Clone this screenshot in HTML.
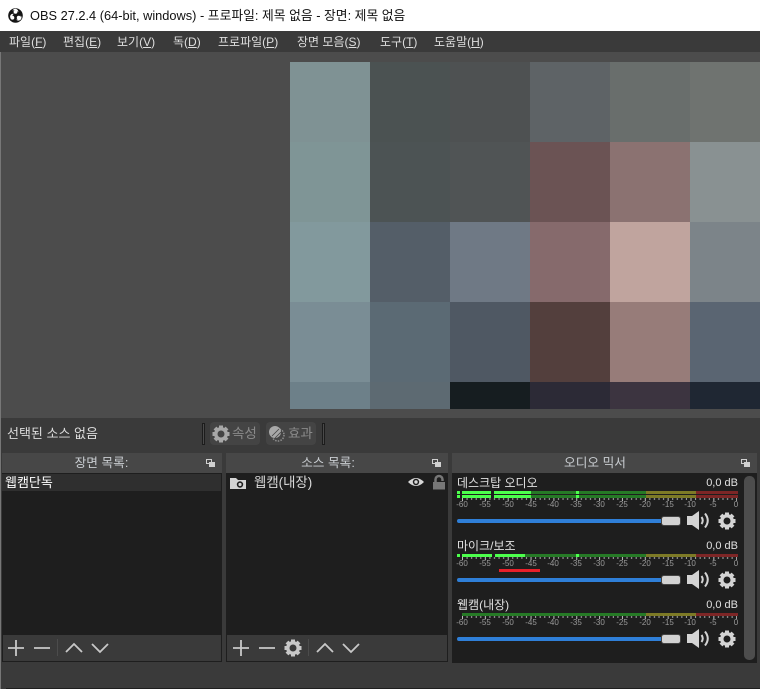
<!DOCTYPE html>
<html lang="ko"><head><meta charset="utf-8"><title>OBS</title>
<style>
html,body{margin:0;padding:0;background:#3a3a3a}
#r{position:relative;width:760px;height:689px;overflow:hidden;background:#3a3a3a;font-family:"Liberation Sans","Noto Sans CJK KR",sans-serif;font-size:12px;color:#ddd}
#r div{position:absolute}
.t{white-space:nowrap;line-height:16px}
.m{top:34px;color:#dedede}
.h{background:#474747;top:453px;height:20px}
.dt{top:455px;color:#c8ccd0;text-align:center;font-size:12.7px}
.l{background:#1e1e1e;top:473px}
.tb{background:#3a3a3a;top:635px;height:26px;border:1px solid #1e1e1e;border-top:0;box-sizing:content-box}
.px{position:absolute}
.db{left:688px;width:50px;text-align:right;color:#e0e0e0;font-size:11px}
</style></head><body><div id="r">
<div style="left:0;top:0;width:760px;height:31px;background:#fff"></div>
<svg class="px" style="left:8px;top:8px" width="15" height="15" viewBox="0 0 15 15"><circle cx="7.5" cy="7.5" r="7.3" fill="#151515"/><path d="M4.500 2.800A3 3 0 0 1 10.300 4.200A4 4 0 0 0 4.500 2.800ZM2.200 9.500A3 3 0 0 1 5.800 5.800A4 4 0 0 0 5 11.500A3 3 0 0 1 2.200 9.500ZM12.800 7.500A3 3 0 0 1 8 11.500A4 4 0 0 0 12.800 7.500Z" fill="#fff"/><circle cx="7.500" cy="3.900" r="1.900" fill="#fff"/><circle cx="4.400" cy="9.700" r="1.900" fill="#fff"/><circle cx="10.700" cy="9.700" r="1.900" fill="#fff"/></svg>
<div class="t" style="left:30px;top:8px;color:#111;font-size:12.800px">OBS 27.2.4 (64-bit, windows) - 프로파일: 제목 없음 - 장면: 제목 없음</div>
<div style="left:0;top:31px;width:760px;height:21px;background:#3a3a3a"></div>
<div class="t m" style="left:9px">파일(<u>F</u>)</div>
<div class="t m" style="left:63px">편집(<u>E</u>)</div>
<div class="t m" style="left:117px">보기(<u>V</u>)</div>
<div class="t m" style="left:173px">독(<u>D</u>)</div>
<div class="t m" style="left:218px">프로파일(<u>P</u>)</div>
<div class="t m" style="left:297px">장면 모음(<u>S</u>)</div>
<div class="t m" style="left:380px">도구(<u>T</u>)</div>
<div class="t m" style="left:434px">도움말(<u>H</u>)</div>
<div style="left:0;top:52px;width:760px;height:366px;background:#4c4c4c"></div>
<div style="left:0;top:52px;width:1px;height:637px;background:#777"></div>
<svg class="px" style="left:290px;top:62px" width="470" height="347" shape-rendering="crispEdges">
<rect x="0" y="0" width="80" height="80" fill="#7f9294"/><rect x="80" y="0" width="80" height="80" fill="#4b5252"/><rect x="160" y="0" width="80" height="80" fill="#4e5152"/><rect x="240" y="0" width="80" height="80" fill="#5e6366"/><rect x="320" y="0" width="80" height="80" fill="#696e6c"/><rect x="400" y="0" width="70" height="80" fill="#6f7370"/>
<rect x="0" y="80" width="80" height="80" fill="#7f9596"/><rect x="80" y="80" width="80" height="80" fill="#4c5354"/><rect x="160" y="80" width="80" height="80" fill="#505455"/><rect x="240" y="80" width="80" height="80" fill="#6b5354"/><rect x="320" y="80" width="80" height="80" fill="#8b7271"/><rect x="400" y="80" width="70" height="80" fill="#899192"/>
<rect x="0" y="160" width="80" height="80" fill="#82999d"/><rect x="80" y="160" width="80" height="80" fill="#545e68"/><rect x="160" y="160" width="80" height="80" fill="#6f7985"/><rect x="240" y="160" width="80" height="80" fill="#866a6c"/><rect x="320" y="160" width="80" height="80" fill="#c0a49e"/><rect x="400" y="160" width="70" height="80" fill="#7c8489"/>
<rect x="0" y="240" width="80" height="80" fill="#7a8d95"/><rect x="80" y="240" width="80" height="80" fill="#5b6a74"/><rect x="160" y="240" width="80" height="80" fill="#4f5863"/><rect x="240" y="240" width="80" height="80" fill="#533f3d"/><rect x="320" y="240" width="80" height="80" fill="#977c79"/><rect x="400" y="240" width="70" height="80" fill="#5a6572"/>
<rect x="0" y="320" width="80" height="27" fill="#6d8089"/><rect x="80" y="320" width="80" height="27" fill="#5d6a72"/><rect x="160" y="320" width="80" height="27" fill="#161d20"/><rect x="240" y="320" width="80" height="27" fill="#2c2a36"/><rect x="320" y="320" width="80" height="27" fill="#3c3440"/><rect x="400" y="320" width="70" height="27" fill="#1f2733"/>
</svg>
<div class="t" style="left:7px;top:426px;color:#dcdcdc;font-size:13px">선택된 소스 없음</div>
<div style="left:202px;top:423px;width:1px;height:20px;border:1px solid #1c1c1c;background:#4a4a4a"></div>
<div style="left:322px;top:423px;width:1px;height:20px;border:1px solid #1c1c1c;background:#4a4a4a"></div>
<div style="left:210px;top:422px;width:50px;height:23px;border-radius:4px;background:#444"></div>
<div style="left:266px;top:422px;width:50px;height:23px;border-radius:4px;background:#444"></div>
<div class="t" style="left:232px;top:426px;color:#8a8a8a;font-size:13.500px">속성</div>
<div class="t" style="left:288px;top:426px;color:#8a8a8a;font-size:13.500px">효과</div>
<svg class="px" style="left:0;top:0" width="760" height="689">
<defs>
<g id="gear"><circle r="5.2" fill="none" stroke="currentColor" stroke-width="3.4"/><g fill="currentColor"><rect x="-2" y="-8.500" width="4" height="4"/><rect x="-2" y="4.500" width="4" height="4"/><rect x="-8.500" y="-2" width="4" height="4"/><rect x="4.500" y="-2" width="4" height="4"/><rect x="-2" y="-8.500" width="4" height="4" transform="rotate(45)"/><rect x="-2" y="4.500" width="4" height="4" transform="rotate(45)"/><rect x="-8.500" y="-2" width="4" height="4" transform="rotate(45)"/><rect x="4.500" y="-2" width="4" height="4" transform="rotate(45)"/></g></g>
<g id="spk"><path d="M0 5H5L12 0V19L5 14H0Z" fill="#d4d4d4"/><path d="M14.500 6Q17 9.500 14.500 13" fill="none" stroke="#d4d4d4" stroke-width="2"/><path d="M18 2.500Q23.500 9.500 18 16.500" fill="none" stroke="#d4d4d4" stroke-width="2"/></g>
<g id="fl"><rect x="0.500" y="0.500" width="5" height="4" fill="none" stroke="#d0d0d0"/><rect x="3" y="3" width="6" height="5" fill="#d0d0d0"/></g>
<pattern id="tk" x="462" y="0" width="22.850" height="8" patternUnits="userSpaceOnUse"><rect x="0" width="1" height="3" fill="#c0c0c0"/><rect x="4.570" width="1" height="2" fill="#a8a8a8"/><rect x="9.140" width="1" height="2" fill="#a8a8a8"/><rect x="13.710" width="1" height="2" fill="#a8a8a8"/><rect x="18.280" width="1" height="2" fill="#a8a8a8"/></pattern>
</defs>
<g style="color:#a8a8a8"><use href="#gear" x="221" y="434"/></g>
<circle cx="278" cy="435" r="6" fill="none" stroke="#8e8e8e" stroke-width="1.500" stroke-dasharray="1.500 1.200"/>
<circle cx="275" cy="432" r="6" fill="#a8a8a8"/>
<path d="M272 436L279 429M275 438L282 431" stroke="#444" stroke-width="0.800"/>
</svg>
<div class="h" style="left:2px;width:220px"></div>
<div class="h" style="left:226px;width:222px"></div>
<div class="h" style="left:452px;width:305px"></div>
<div class="t dt" style="left:2px;width:199px">장면 목록:</div>
<div class="t dt" style="left:226px;width:204px">소스 목록:</div>
<div class="t dt" style="left:452px;width:286px">오디오 믹서</div>
<div class="l" style="left:2px;width:220px;height:162px"></div>
<div class="l" style="left:226px;width:222px;height:162px"></div>
<div class="l" style="left:452px;width:305px;height:190px"></div>
<div style="left:2px;top:474px;width:219px;height:17px;background:#2f2f2f"></div>
<div class="t" style="left:5px;top:475px;color:#fff;font-size:13px">웹캠단독</div>
<div class="t" style="left:254px;top:475px;color:#d8d8d8;font-size:13.400px">웹캠(내장)</div>
<div class="tb" style="left:2px;width:218px"></div>
<div class="tb" style="left:226px;width:220px"></div>
<div style="left:744px;top:476px;width:11px;height:184px;border-radius:5px;background:#4d4d4d"></div>
<div class="t" style="left:457px;top:475px;color:#e0e0e0">데스크탑 오디오</div>
<div class="t" style="left:457px;top:538px;color:#e0e0e0">마이크/보조</div>
<div class="t" style="left:457px;top:597px;color:#e0e0e0">웹캠(내장)</div>
<div class="t db" style="top:475px">0,0 dB</div>
<div class="t db" style="top:538px">0,0 dB</div>
<div class="t db" style="top:597px">0,0 dB</div>
<svg class="px" style="left:0;top:0" width="760" height="689">
<use href="#fl" x="206" y="459"/><use href="#fl" x="432" y="459"/><use href="#fl" x="741" y="459"/>
<path d="M230 478H236L238 480H246V489H230Z" fill="#d4d4d4"/><circle cx="240" cy="484.500" r="3.200" fill="#1e1e1e"/><circle cx="240" cy="484.500" r="1.600" fill="#d4d4d4"/>
<path d="M408 482Q416 474 424 482Q416 490 408 482Z" fill="#d8d8d8"/><circle cx="416" cy="482" r="3.200" fill="#1e1e1e"/><circle cx="416" cy="482" r="1.700" fill="#d8d8d8"/>
<path d="M435.500 483V479.500A3.500 3.500 0 0 1 442.500 479.500V481" fill="none" stroke="#777" stroke-width="2.500"/><rect x="433" y="482" width="12" height="7.500" fill="#777"/>
<g fill="none" stroke="#c8c8c8" stroke-width="1.800">
<path d="M8 648H24M16 640V656M34 648H50"/><path d="M66 652L74 644L82 652M92 644L100 652L108 644"/>
<path d="M233 648H249M241 640V656M259 648H275"/><path d="M317 652L325 644L333 652M343 644L351 652L359 644"/></g>
<path d="M57.500 639V656M308.500 639V656" stroke="#4c4c4c"/>
<g style="color:#c8c8c8"><use href="#gear" x="293" y="648"/></g>
<g shape-rendering="crispEdges">
<rect x="457" y="491" width="281" height="3" fill="#267a26"/><rect x="457" y="495" width="281" height="3" fill="#267a26"/>
<rect x="646" y="491" width="50" height="3" fill="#7d7a26"/><rect x="646" y="495" width="50" height="3" fill="#7d7a26"/>
<rect x="696" y="491" width="42" height="3" fill="#7d2626"/><rect x="696" y="495" width="42" height="3" fill="#7d2626"/>
<rect x="457" y="491" width="5" height="7" fill="#1e1e1e"/><rect x="491" y="491" width="3" height="7" fill="#1e1e1e"/>
<g fill="#4cff4c"><rect x="457" y="491" width="3" height="3"/><rect x="457" y="495" width="3" height="3"/><rect x="462" y="491" width="29" height="3"/><rect x="462" y="495" width="29" height="3"/><rect x="494" y="491" width="37" height="3"/><rect x="494" y="495" width="37" height="3"/><rect x="576" y="491" width="3" height="3"/><rect x="576" y="495" width="3" height="3"/></g>
<rect x="457" y="554" width="281" height="3" fill="#267a26"/><rect x="646" y="554" width="50" height="3" fill="#7d7a26"/><rect x="696" y="554" width="42" height="3" fill="#7d2626"/>
<rect x="460" y="554" width="2" height="3" fill="#1e1e1e"/><rect x="492" y="554" width="3" height="3" fill="#1e1e1e"/>
<g fill="#4cff4c"><rect x="457" y="554" width="3" height="3"/><rect x="462" y="554" width="30" height="3"/><rect x="495" y="554" width="30" height="3"/><rect x="576" y="554" width="3" height="3"/></g>
<rect x="462" y="613" width="276" height="3" fill="#267a26"/><rect x="646" y="613" width="50" height="3" fill="#7d7a26"/><rect x="696" y="613" width="42" height="3" fill="#7d2626"/>
<rect x="499" y="569" width="41" height="3" fill="#e8202a"/>
<rect x="462" y="0" width="275" height="3" fill="url(#tk)" transform="translate(0,498)"/>
<rect x="462" y="0" width="275" height="3" fill="url(#tk)" transform="translate(0,557)"/>
<rect x="462" y="0" width="275" height="3" fill="url(#tk)" transform="translate(0,616)"/>
</g>
<g font-size="8" fill="#9a9a9a" text-anchor="middle" font-family="Liberation Sans, sans-serif">
<text x="462" y="507">-60</text><text x="485" y="507">-55</text><text x="508" y="507">-50</text><text x="531" y="507">-45</text><text x="553" y="507">-40</text><text x="576" y="507">-35</text><text x="599" y="507">-30</text><text x="622" y="507">-25</text><text x="645" y="507">-20</text><text x="668" y="507">-15</text><text x="690" y="507">-10</text><text x="713" y="507">-5</text><text x="736" y="507">0</text>
<text x="462" y="566">-60</text><text x="485" y="566">-55</text><text x="508" y="566">-50</text><text x="531" y="566">-45</text><text x="553" y="566">-40</text><text x="576" y="566">-35</text><text x="599" y="566">-30</text><text x="622" y="566">-25</text><text x="645" y="566">-20</text><text x="668" y="566">-15</text><text x="690" y="566">-10</text><text x="713" y="566">-5</text><text x="736" y="566">0</text>
<text x="462" y="625">-60</text><text x="485" y="625">-55</text><text x="508" y="625">-50</text><text x="531" y="625">-45</text><text x="553" y="625">-40</text><text x="576" y="625">-35</text><text x="599" y="625">-30</text><text x="622" y="625">-25</text><text x="645" y="625">-20</text><text x="668" y="625">-15</text><text x="690" y="625">-10</text><text x="713" y="625">-5</text><text x="736" y="625">0</text>
</g>
<rect x="457" y="519" width="206" height="4" rx="2" fill="#2f7fd8"/><rect x="661.500" y="516.500" width="19" height="9" rx="2.500" fill="#d2d2d2" stroke="#444"/>
<rect x="457" y="578" width="206" height="4" rx="2" fill="#2f7fd8"/><rect x="661.500" y="575.500" width="19" height="9" rx="2.500" fill="#d2d2d2" stroke="#444"/>
<rect x="457" y="637" width="206" height="4" rx="2" fill="#2f7fd8"/><rect x="661.500" y="634.500" width="19" height="9" rx="2.500" fill="#d2d2d2" stroke="#444"/>
<use href="#spk" x="687" y="511"/><use href="#spk" x="687" y="570"/><use href="#spk" x="687" y="629"/>
<g style="color:#d4d4d4"><use href="#gear" x="727" y="521"/><use href="#gear" x="727" y="580"/><use href="#gear" x="727" y="639"/></g>
<rect x="6" y="688" width="754" height="1" fill="#1e1e1e"/>
</svg>
</div></body></html>
